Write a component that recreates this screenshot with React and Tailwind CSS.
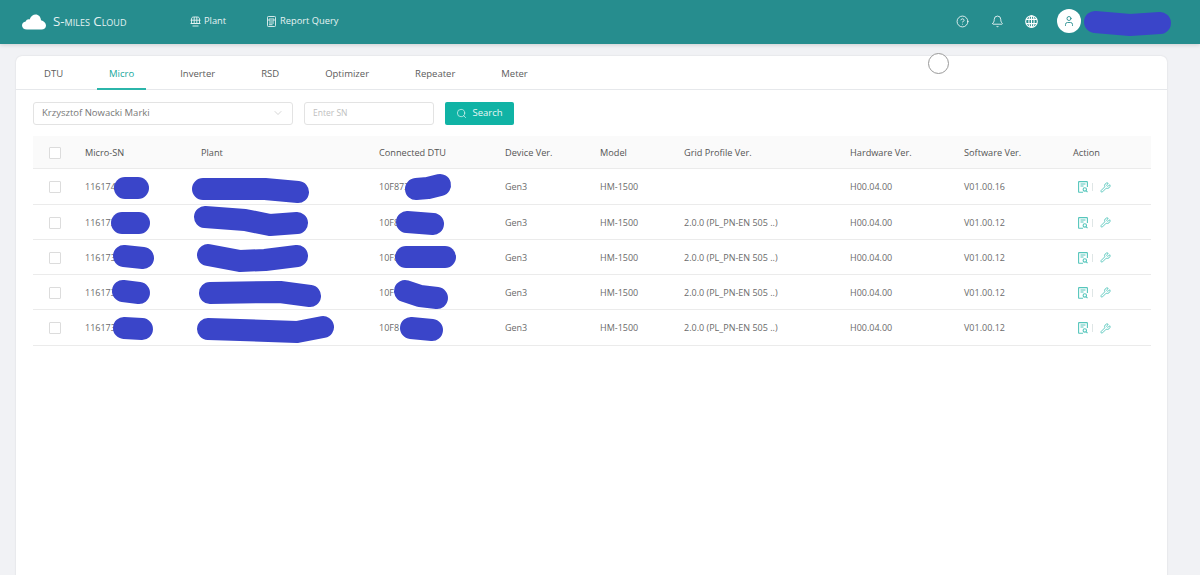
import { ChevronDown, Search, CircleHelp, Bell, User, Wrench } from "lucide-react";

const tabs = ["DTU", "Micro", "Inverter", "RSD", "Optimizer", "Repeater", "Meter"];
const headers = ["Micro-SN", "Plant", "Connected DTU", "Device Ver.", "Model", "Grid Profile Ver.", "Hardware Ver.", "Software Ver.", "Action"];
const rows = [
  { sn: "116174", dtu: "10F873", grid: "", sw: "V01.00.16", h: "h-[36px]" },
  { sn: "116173", dtu: "10F8", grid: "2.0.0 (PL_PN-EN 505 ..)", sw: "V01.00.12", h: "h-[35px]" },
  { sn: "116173", dtu: "10F8", grid: "2.0.0 (PL_PN-EN 505 ..)", sw: "V01.00.12", h: "h-[35px]" },
  { sn: "116173", dtu: "10F", grid: "2.0.0 (PL_PN-EN 505 ..)", sw: "V01.00.12", h: "h-[35px]" },
  { sn: "116173", dtu: "10F8", grid: "2.0.0 (PL_PN-EN 505 ..)", sw: "V01.00.12", h: "h-[36px]" },
];

// marker scribbles drawn over the private values
const scribbles = [
  "M1095 22 L1130 25 L1160 23",
  "M125 188 L138 188",
  "M203 189 L265 189 L298 192",
  "M416 189 L428 188 L440 185",
  "M122 223 L139 223",
  "M205 217 L245 220 L270 225 L297 223",
  "M407 222 L433 224",
  "M124 256 L143 258",
  "M208 255 L240 261 L265 260 L297 256",
  "M406 257 L445 257",
  "M123 291 L139 293",
  "M210 293 L280 292 L310 296",
  "M405 291 L420 296 L437 298",
  "M124 328 L142 329",
  "M208 329 L297 332 L323 327",
  "M411 328 L432 330",
];

function Checkbox() {
  return <span className="block w-3 h-3 border border-[#dcdcdc] bg-white rounded-[1px]" />;
}

function PlantIcon() {
  return (
    <svg width="11" height="11" viewBox="0 0 11 11" fill="none" stroke="currentColor" strokeWidth="0.9">
      <path d="M1.5 7.5 L1.5 3 C1.5 1.6 2.5 1 3.5 1 L7.5 1 C8.5 1 9.5 1.6 9.5 3 L9.5 7.5 Z" />
      <path d="M0.5 4.2 H10.5 M0.5 7.5 H10.5 M4.2 1 V7.5 M6.8 1 V7.5 M2.5 10 H8.5" />
    </svg>
  );
}

function ReportIcon() {
  return (
    <svg width="9" height="11" viewBox="0 0 9 11" fill="none" stroke="currentColor" strokeWidth="0.9">
      <rect x="0.5" y="0.5" width="8" height="10" rx="0.8" />
      <path d="M2 3 H7 V5 H2 Z M2 7 H7 M2 8.7 H5.5" />
    </svg>
  );
}

function GlobeIcon() {
  return (
    <svg width="13" height="13" viewBox="0 0 13 13" fill="none" stroke="currentColor" strokeWidth="1.1">
      <circle cx="6.5" cy="6.5" r="5.8" />
      <ellipse cx="6.5" cy="6.5" rx="2.6" ry="5.8" />
      <path d="M1 4.4 H12 M1 8.6 H12 M6.5 0.7 V12.3" />
    </svg>
  );
}

function DocSearchIcon() {
  return (
    <svg width="10" height="12" viewBox="0 0 10 12" fill="none" stroke="currentColor" strokeWidth="1.1">
      <path d="M5 11.3 H1.2 C0.8 11.3 0.6 11.1 0.6 10.7 V1.2 C0.6 0.8 0.8 0.6 1.2 0.6 H8.8 C9.2 0.6 9.4 0.8 9.4 1.2 V6" />
      <path d="M2.5 3 H7.5 M2.5 5 H5.5" />
      <circle cx="6.8" cy="8.4" r="1.7" />
      <path d="M8 9.7 L9.5 11.2" />
    </svg>
  );
}

export default function App() {
  return (
    <div className="relative h-[575px] overflow-hidden bg-[#f1f2f5] font-['Open_Sans',sans-serif] text-[9px] text-[#666]">
      <header className="flex items-center h-[44px] bg-[#268d8e] text-white shadow-[0_1px_4px_rgba(0,0,0,0.15)]">
        <svg className="ml-[22px]" width="24" height="16" viewBox="0 0 24 16" fill="#fff">
          <path d="M5 15.5 C2 15.5 0 13.6 0 11.4 C0 9.3 1.6 7.7 3.7 7.5 C4.4 5.8 6 5 7.6 5.5 C8.8 2.3 11.2 0.5 13.6 0.5 C16.6 0.5 18.8 2.9 19 6.2 C21.8 6.9 24 9 24 11.5 C24 13.9 22 15.5 19.5 15.5 Z" />
        </svg>
        <span className="ml-[7px] w-[137px] text-[13.3px] leading-none [font-variant:small-caps] text-[#e4f2f2]">S-miles Cloud</span>
        <nav className="flex items-center mb-[2px] text-[9.3px] font-medium text-[#e6f3f3]">
          <span className="flex items-center gap-[3px] w-[77px]">
            <PlantIcon />
            Plant
          </span>
          <span className="flex items-center gap-[4px]">
            <ReportIcon />
            Report Query
          </span>
        </nav>
        <div className="flex items-center ml-auto mr-[119px] mb-[2px]">
          <CircleHelp size={13} strokeWidth={1.5} />
          <Bell size={13} strokeWidth={1.5} className="ml-[22px]" />
          <span className="ml-[21px]">
            <GlobeIcon />
          </span>
          <span className="flex items-center justify-center ml-[19px] w-[24px] h-[24px] rounded-full bg-white text-[#268d8e]">
            <User size={12} strokeWidth={1.8} />
          </span>
        </div>
      </header>

      <main className="pt-3 pl-4 pr-[33px] h-[531px]">
        <section className="h-[600px] bg-white rounded-md shadow-[0_0_2px_rgba(0,0,0,0.12)]">
          <div className="flex gap-[22px] h-[34px] pl-[17px] border-b border-[#e6e8eb] text-[9.5px]">
            {tabs.map((t, i) => (
              <div
                key={t}
                className={
                  t === "Micro"
                    ? "flex items-center pt-[5px] px-3 h-[34px] text-[#14a89c] border-b-2 border-[#2bb5aa]"
                    : i === 0
                      ? "flex items-center pt-[4px] pl-[11px] pr-3 h-[33px] text-[#5c5c5c]"
                      : "flex items-center pt-[4px] px-3 h-[33px] text-[#5c5c5c]"
                }
              >
                {t}
              </div>
            ))}
          </div>

          <div className="flex items-center h-[46px] pl-[17px]">
            <div className="flex items-center justify-between w-[260px] h-[23px] px-2 border border-[#e3e3e3] rounded-[3px] text-[9.5px] text-[#777]">
              Krzysztof Nowacki Marki
              <ChevronDown size={12} strokeWidth={1} className="text-[#aaa]" />
            </div>
            <div className="flex items-center ml-[11px] w-[130px] h-[23px] px-2 border border-[#e3e3e3] rounded-[3px] text-[8.5px] text-[#c0c0c0]">
              Enter SN
            </div>
            <button className="flex items-center justify-center gap-[5px] ml-[11px] w-[69px] h-[23px] rounded-[2px] bg-[#10b3a5] text-[9.5px] text-[#e8f8f6]">
              <Search size={11} strokeWidth={1.5} />
              Search
            </button>
          </div>

          <div className="mx-[17px]">
            <table className="w-[1118px] table-fixed border-collapse">
              <colgroup>
                <col className="w-[52px]" />
                <col className="w-[116px]" />
                <col className="w-[178px]" />
                <col className="w-[126px]" />
                <col className="w-[95px]" />
                <col className="w-[84px]" />
                <col className="w-[166px]" />
                <col className="w-[114px]" />
                <col className="w-[109px]" />
                <col />
              </colgroup>
              <thead>
                <tr className="h-[32px] bg-[#fafafa] border-b border-[#ebebeb]">
                  <th className="pl-4 pt-[2px]">
                    <Checkbox />
                  </th>
                  {headers.map((h) => (
                    <th key={h} className="pt-[2px] text-left text-[9.2px] font-medium text-[#555]">
                      {h}
                    </th>
                  ))}
                </tr>
              </thead>
              <tbody>
                {rows.map((r, i) => (
                  <tr key={i} className={`${r.h} border-b border-[#ebebeb] text-[#6b6b6b] [&>td]:pt-[2px]`}>
                    <td className="pl-4">
                      <Checkbox />
                    </td>
                    <td>{r.sn}</td>
                    <td />
                    <td>{r.dtu}</td>
                    <td>Gen3</td>
                    <td>HM-1500</td>
                    <td>{r.grid}</td>
                    <td>H00.04.00</td>
                    <td>{r.sw}</td>
                    <td>
                      <div className="flex items-center pl-[5px] text-[#55c6bc]">
                        <DocSearchIcon />
                        <span className="ml-[4px] mr-[7px] w-px h-[8px] bg-[#dfe6e6]" />
                        <Wrench size={11} strokeWidth={2} />
                      </div>
                    </td>
                  </tr>
                ))}
              </tbody>
            </table>
          </div>
        </section>
      </main>

      <svg className="absolute inset-0 pointer-events-none" width="1200" height="575" fill="none">
        {scribbles.map((d) => (
          <path key={d} d={d} stroke="#3a45c9" strokeWidth="22" strokeLinecap="round" strokeLinejoin="round" />
        ))}
      </svg>
      <span className="absolute left-[928px] top-[53px] w-[21px] h-[21px] rounded-full border border-[#999] bg-white" />
    </div>
  );
}
